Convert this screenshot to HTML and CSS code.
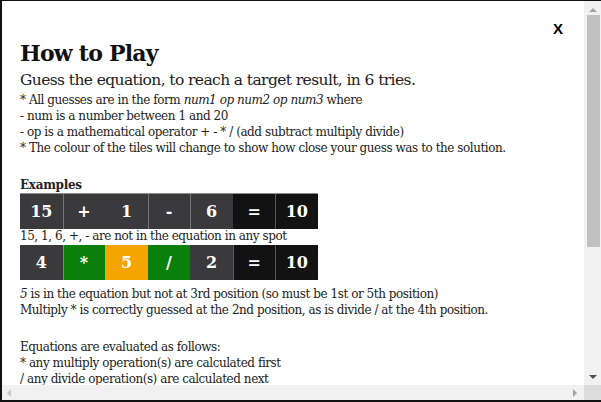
FILE: index.html
```html
<!DOCTYPE html>
<html>
<head>
<meta charset="utf-8">
<link rel="stylesheet" href="styles.css">
</head>
<body>
<div class="modal">
  <div class="viewport">
    <button class="close">X</button>
    <div class="content">
      <h1 class="title">How to Play</h1>
      <p class="lead">Guess the equation, to reach a target result, in 6 tries.</p>
      <p class="rules">* All guesses are in the form <i>num1 op num2 op num3</i> where<br>
      - num is a number between 1 and 20<br>
      - op is a mathematical operator + - * / (add subtract multiply divide)<br>
      * The colour of the tiles will change to show how close your guess was to the solution.</p>
      <h2 class="examples">Examples</h2>
      <div class="row top">
        <div class="tile absent">15</div>
        <div class="tile absent seam">+</div>
        <div class="tile absent">1</div>
        <div class="tile absent seam">-</div>
        <div class="tile absent seam">6</div>
        <div class="tile fixed">=</div>
        <div class="tile fixed seam">10</div>
      </div>
      <p class="note">15, 1, 6, +, - are not in the equation in any spot</p>
      <div class="row">
        <div class="tile absent">4</div>
        <div class="tile correct seam">*</div>
        <div class="tile present">5</div>
        <div class="tile correct">/</div>
        <div class="tile absent">2</div>
        <div class="tile fixed seam">=</div>
        <div class="tile fixed seam">10</div>
      </div>
      <p class="note2"><i>5</i> is in the equation but not at 3rd position (so must be 1st or 5th position)<br>
      Multiply * is correctly guessed at the 2nd position, as is divide / at the 4th position.</p>
      <p class="eval">Equations are evaluated as follows:<br>
      * any multiply operation(s) are calculated first<br>
      / any divide operation(s) are calculated next</p>
    </div>
  </div>
  <div class="vbar">
    <span class="arrow up"></span>
    <span class="thumb"></span>
    <span class="arrow down"></span>
  </div>
  <div class="hbar">
    <span class="arrow left"></span>
    <span class="arrow right"></span>
  </div>
  <div class="corner"></div>
</div>
</body>
</html>
```
FILE: styles.css
```css
html, body {
  margin: 0;
  padding: 0;
  background: #111;
}
body {
  width: 601px;
  height: 402px;
  overflow: hidden;
}
.modal {
  margin: 1px 0 0 2px;
  width: 599px;
  height: 399px;
  background: #fff;
  display: grid;
  grid-template-columns: 582px 17px;
  grid-template-rows: 384px 15px;
  font-family: "DejaVu Serif", serif;
  color: #222;
}
.viewport {
  position: relative;
  overflow: hidden;
}
.close {
  position: absolute;
  top: 19px;
  left: 551px;
  border: 0;
  background: none;
  padding: 0;
  font-family: "Liberation Sans", Arial, sans-serif;
  font-weight: bold;
  font-size: 15px;
  color: #000;
}
.content {
  padding: 37px 0 20px 18px;
}
.title {
  margin: 0;
  font-size: 22px;
  letter-spacing: -0.8px;
  line-height: 30px;
  font-weight: bold;
  color: #111;
}
.lead {
  margin: 0;
  font-size: 15.5px;
  letter-spacing: -0.6px;
  line-height: 24px;
}
.rules, .note, .note2, .eval {
  margin: 0;
  font-size: 12px;
  letter-spacing: -0.45px;
  line-height: 16px;
}
.examples {
  margin: 21px 0 0;
  font-size: 12px;
  letter-spacing: -0.3px;
  line-height: 16px;
  font-weight: bold;
}
.row {
  display: flex;
  width: 298px;
  height: 35px;
}
.row.top {
  border-top: 1px solid #8a8a8a;
}
.tile {
  flex: 1;
  display: flex;
  align-items: center;
  justify-content: center;
  color: #fff;
  font-weight: 900;
  font-size: 16px;
}
.seam {
  box-shadow: inset 1px 0 0 rgba(255, 255, 255, 0.3);
}
.absent { background: #3a3a3c; }
.fixed { background: #121213; }
.correct { background: #0a800a; }
.present { background: #f5a500; }
.note { margin: -1px 0 1px; }
.note2 { margin-top: 6px; }
.eval { margin-top: 21px; }

.vbar {
  background: #f1f1f1;
  display: flex;
  flex-direction: column;
  align-items: center;
}
.thumb {
  display: block;
  width: 13px;
  height: 232px;
  margin-top: 3px;
  margin-left: 2px;
  background: #c1c1c1;
}
.arrow {
  display: block;
  width: 0;
  height: 0;
  border-style: solid;
}
.arrow.up {
  margin-top: 7px;
  border-width: 0 4px 4px 4px;
  border-color: transparent transparent #a3a3a3 transparent;
}
.arrow.down {
  margin-top: auto;
  margin-bottom: 6px;
  border-width: 4px 4px 0 4px;
  border-color: #505050 transparent transparent transparent;
}
.hbar {
  background: #f1f1f1;
  display: flex;
  align-items: center;
  justify-content: space-between;
  padding: 0 7px 0 5px;
}
.arrow.left {
  border-width: 4px 4px 4px 0;
  border-color: transparent #c8c8c8 transparent transparent;
}
.arrow.right {
  border-width: 4px 0 4px 4px;
  border-color: transparent transparent transparent #a3a3a3;
}
.corner {
  background: #dcdcdc;
}
```
